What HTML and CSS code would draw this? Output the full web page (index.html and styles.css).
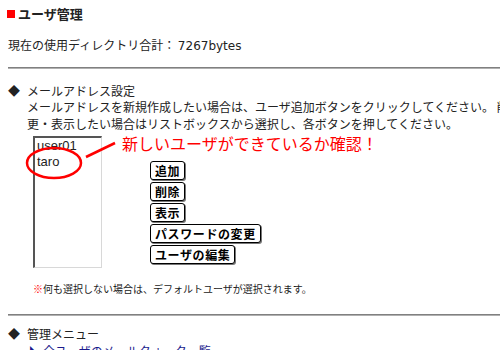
FILE: index.html
```html
<!DOCTYPE html>
<html lang="ja">
<head>
  <meta charset="UTF-8">
  <title>ユーザ管理</title>
  <link rel="stylesheet" href="styles.css">
</head>
<body>
  <div class="page">
    <h1 class="title"><span class="mark"></span>ユーザ管理</h1>
    <p class="usage">現在の使用ディレクトリ合計： <span class="bytes">7267bytes</span></p>
    <hr>

    <h2 class="section"><span class="diamond">◆</span>メールアドレス設定</h2>
    <p class="desc">メールアドレスを新規作成したい場合は、ユーザ追加ボタンをクリックしてください。 削除・変<br>更・表示したい場合はリストボックスから選択し、各ボタンを押してください。</p>

    <div class="user-form">
      <div class="user-list">
        <div class="user-item">user01</div>
        <div class="user-item">taro</div>
      </div>
      <div class="actions">
        <button type="button">追加</button>
        <button type="button">削除</button>
        <button type="button">表示</button>
        <button type="button">パスワードの変更</button>
        <button type="button">ユーザの編集</button>
      </div>
    </div>
    <p class="note"><span class="note-mark">※</span>何も選択しない場合は、デフォルトユーザが選択されます。</p>
    <hr>

    <h2 class="section"><span class="diamond">◆</span>管理メニュー</h2>
    <ul class="menu">
      <li><a href="#">全ユーザのメールクォータ一覧</a></li>
    </ul>

    <!-- 注釈 -->
    <svg class="marks" width="500" height="350" viewBox="0 0 500 350">
      <ellipse cx="54" cy="163" rx="27" ry="15" fill="none" stroke="#f00" stroke-width="2.5"/>
      <line x1="86" y1="157" x2="115" y2="143" stroke="#f00" stroke-width="2.5"/>
    </svg>
    <div class="callout">新しいユーザができているか確認！</div>
  </div>
</body>
</html>
```

FILE: styles.css
```css
html, body {
  margin: 0;
  overflow: hidden;
  background-color: #fff;
}

body {
  font-family: "Noto Sans CJK JP", "DejaVu Sans", sans-serif;
  font-size: 12px;
  color: #222;
}

.page {
  position: relative;
  width: 560px;
  padding: 6px 0 0 8px;
}

.title {
  margin: 0;
  font-size: 13px;
  font-weight: bold;
  line-height: 16px;
  display: flex;
  align-items: center;
}

.mark {
  width: 8px;
  height: 8px;
  background-color: #f00;
  margin: 0 3px 0 -1px;
}

.usage {
  margin: 15px 0 0;
  line-height: 16px;
}

.bytes {
  font-family: "DejaVu Sans", sans-serif;
  font-size: 12px;
}

hr {
  margin: 13px 0 0;
  border: none;
  border-top: 1px solid #808080;
  border-bottom: 1px solid #b0b0b0;
}

.section {
  margin: 15px 0 0;
  font-size: 12px;
  font-weight: normal;
  line-height: 14px;
}

.diamond {
  display: inline-block;
  width: 19px;
}

.desc {
  margin: 0 0 0 19px;
  line-height: 17px;
  white-space: nowrap;
}

.user-form {
  display: flex;
  margin-top: 4px;
}

.user-list {
  margin-left: 25px;
  width: 66px;
  height: 129px;
  border-top: 2px solid #555;
  border-left: 2px solid #555;
  border-right: 1px solid #d8d8d8;
  border-bottom: 1px solid #d8d8d8;
  font-family: "Liberation Sans", Arial, sans-serif;
  font-size: 13px;
  overflow: hidden;
}

.user-item {
  line-height: 16px;
  padding-left: 2px;
}

.actions {
  margin-left: 48px;
  padding-top: 25px;
  display: flex;
  flex-direction: column;
  align-items: flex-start;
  gap: 2px;
}

.actions button {
  height: 19px;
  padding: 0 4px;
  background-color: #fff;
  border: 1px solid #000;
  border-radius: 3px;
  box-shadow: 1px 1px 0 #777;
  font-family: "Noto Sans CJK JP", sans-serif;
  font-size: 12px;
  font-weight: bold;
  letter-spacing: 0.6px;
  line-height: 17px;
  color: #000;
}

.note {
  margin: 14px 0 0 25px;
  font-size: 10px;
  line-height: 14px;
}

.note-mark {
  color: #f00;
}

.note + hr {
  margin-top: 18px;
}

.note + hr + .section {
  margin-top: 11px;
}

.menu {
  list-style: none;
  margin: 2px 0 0;
  padding-left: 22px;
  line-height: 16px;
}

.menu a {
  color: #1a1a8c;
  text-decoration: none;
}

.menu a::before {
  content: "\25E3";
  font-size: 11px;
  margin-right: 2px;
}

.marks {
  position: absolute;
  left: 0;
  top: 0;
  pointer-events: none;
}

.callout {
  position: absolute;
  left: 122px;
  top: 133px;
  font-size: 16px;
  line-height: 20px;
  color: #f00;
  white-space: nowrap;
}
```
